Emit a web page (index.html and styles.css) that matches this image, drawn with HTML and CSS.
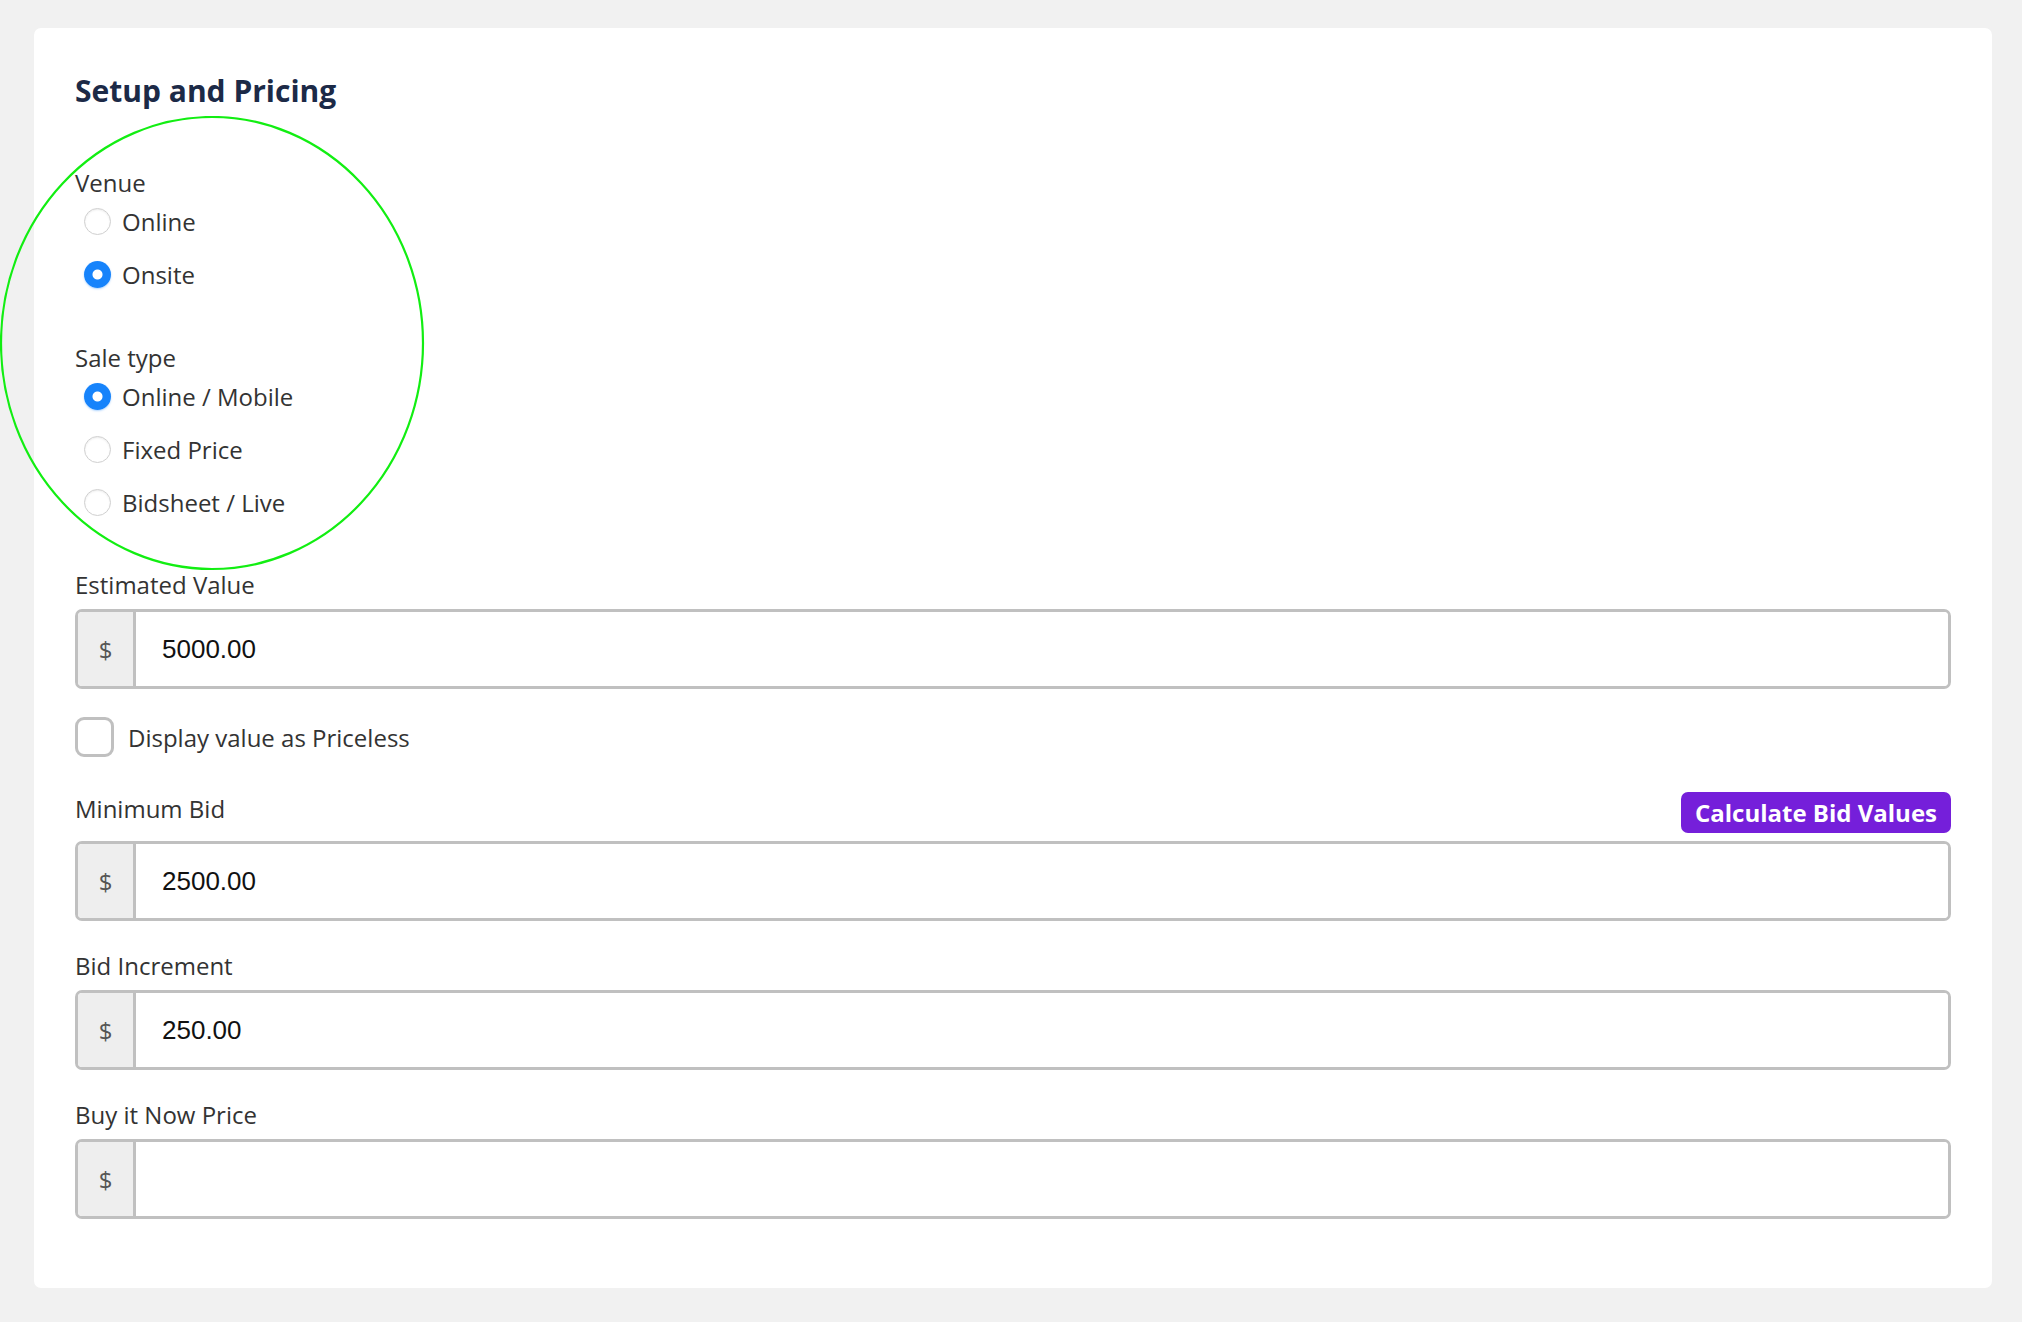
FILE: index.html
```html
<!DOCTYPE html>
<html lang="en">
<head>
  <meta charset="UTF-8">
  <meta name="viewport" content="width=device-width, initial-scale=1">
  <title>Setup and Pricing</title>
  <link rel="stylesheet" href="styles.css">
</head>
<body>
  <section class="card">
    <h2 class="card-title">Setup and Pricing</h2>

    <div class="radio-group venue">
      <div class="group-label">Venue</div>
      <label class="radio-row"><input type="radio" name="venue"> <span>Online</span></label>
      <label class="radio-row"><input type="radio" name="venue" checked> <span>Onsite</span></label>
    </div>

    <div class="radio-group sale-type">
      <div class="group-label">Sale type</div>
      <label class="radio-row"><input type="radio" name="saleType" checked> <span>Online / Mobile</span></label>
      <label class="radio-row"><input type="radio" name="saleType"> <span>Fixed Price</span></label>
      <label class="radio-row"><input type="radio" name="saleType"> <span>Bidsheet / Live</span></label>
    </div>

    <div class="field estimated">
      <label class="field-label">Estimated Value</label>
      <div class="input-group">
        <span class="prefix">$</span>
        <input type="text" value="5000.00">
      </div>
    </div>

    <label class="check-row">
      <input type="checkbox">
      <span>Display value as Priceless</span>
    </label>

    <div class="field minimum">
      <div class="field-head">
        <label class="field-label">Minimum Bid</label>
        <button class="calc-button">Calculate Bid Values</button>
      </div>
      <div class="input-group">
        <span class="prefix">$</span>
        <input type="text" value="2500.00">
      </div>
    </div>

    <div class="field increment">
      <label class="field-label">Bid Increment</label>
      <div class="input-group">
        <span class="prefix">$</span>
        <input type="text" value="250.00">
      </div>
    </div>

    <div class="field buy-now">
      <label class="field-label">Buy it Now Price</label>
      <div class="input-group">
        <span class="prefix">$</span>
        <input type="text" value="">
      </div>
    </div>
  </section>

  <!-- reviewer's highlight around the radio options -->
  <svg class="annotation" width="426" height="456" viewBox="0 0 426 456">
    <ellipse cx="212" cy="227" rx="211" ry="226" fill="none" stroke="#12ee12" stroke-width="2.2"/>
  </svg>
</body>
</html>
```

FILE: styles.css
```css
body {
  margin: 0;
  padding: 28px 0 34px 34px;
  background: #f1f1f1;
  font-family: 'Open Sans', sans-serif;
  color: #333;
  position: relative;
}
.card {
  width: 1958px;
  box-sizing: border-box;
  background: white;
  border-radius: 7px;
  padding: 45px 41px 69px 41px;
}
.card-title {
  margin: 0;
  font-size: 30px;
  line-height: 36px;
  font-weight: 700;
  color: #1c2a47;
}
.radio-group {
  display: flex;
  flex-direction: column;
}
.venue {
  margin-top: 62px;
}
.sale-type {
  margin-top: 45px;
}
.group-label,
.field-label {
  display: block;
  font-size: 24px;
  line-height: 24px;
  color: #333;
}
.radio-row {
  display: flex;
  align-items: center;
  height: 53px;
  padding-left: 9px;
  font-size: 24px;
  color: #333;
}
.radio-row input {
  appearance: none;
  -webkit-appearance: none;
  margin: 0 11px 0 0;
  width: 27px;
  height: 27px;
  border-radius: 50%;
  border: 1.5px solid #d0d0d0;
  background: white;
  box-shadow: inset 0 1px 2px rgba(0,0,0,0.08);
  box-sizing: border-box;
}
.radio-row input:checked {
  border: none;
  background: radial-gradient(circle, #fff 0 4.5px, #1683fb 5.5px);
  box-shadow: 0 1px 2px rgba(22,131,251,0.35);
}
.field.estimated {
  margin-top: 44px;
}
.field.increment,
.field.buy-now {
  margin-top: 33px;
}
.field-label {
  margin-bottom: 12px;
}
.field-head {
  display: flex;
  justify-content: space-between;
  align-items: flex-end;
  margin-bottom: 8px;
}
.field-head .field-label {
  margin-bottom: 0;
  padding-bottom: 12px;
}
.calc-button {
  height: 41px;
  padding: 0 14px;
  border: none;
  border-radius: 7px;
  background: #751fda;
  color: white;
  font-family: 'Open Sans', sans-serif;
  font-size: 24px;
  font-weight: 700;
  line-height: 41px;
  cursor: pointer;
}
.field.minimum {
  margin-top: 35px;
}
.input-group {
  display: flex;
  height: 80px;
  box-sizing: border-box;
  border: 3px solid #c0c0c0;
  border-radius: 7px;
  overflow: hidden;
}
.prefix {
  width: 58px;
  box-sizing: border-box;
  border-right: 3px solid #c0c0c0;
  background: #eeeeee;
  color: #555;
  font-size: 24px;
  display: flex;
  align-items: center;
  justify-content: center;
}
.input-group input {
  flex: 1;
  border: none;
  outline: none;
  padding: 0 0 0 26px;
  font-family: 'Liberation Sans', Arial, sans-serif;
  font-size: 26px;
  color: #111;
  background: white;
}
.check-row {
  display: flex;
  align-items: center;
  height: 40px;
  margin-top: 28px;
  font-size: 24px;
  color: #333;
}
.check-row input {
  appearance: none;
  -webkit-appearance: none;
  margin: 0 14px 0 0;
  width: 39px;
  height: 40px;
  box-sizing: border-box;
  border: 3px solid #c0c0c0;
  border-radius: 9px;
  background: white;
}
.annotation {
  position: absolute;
  left: 0;
  top: 116px;
}
```
